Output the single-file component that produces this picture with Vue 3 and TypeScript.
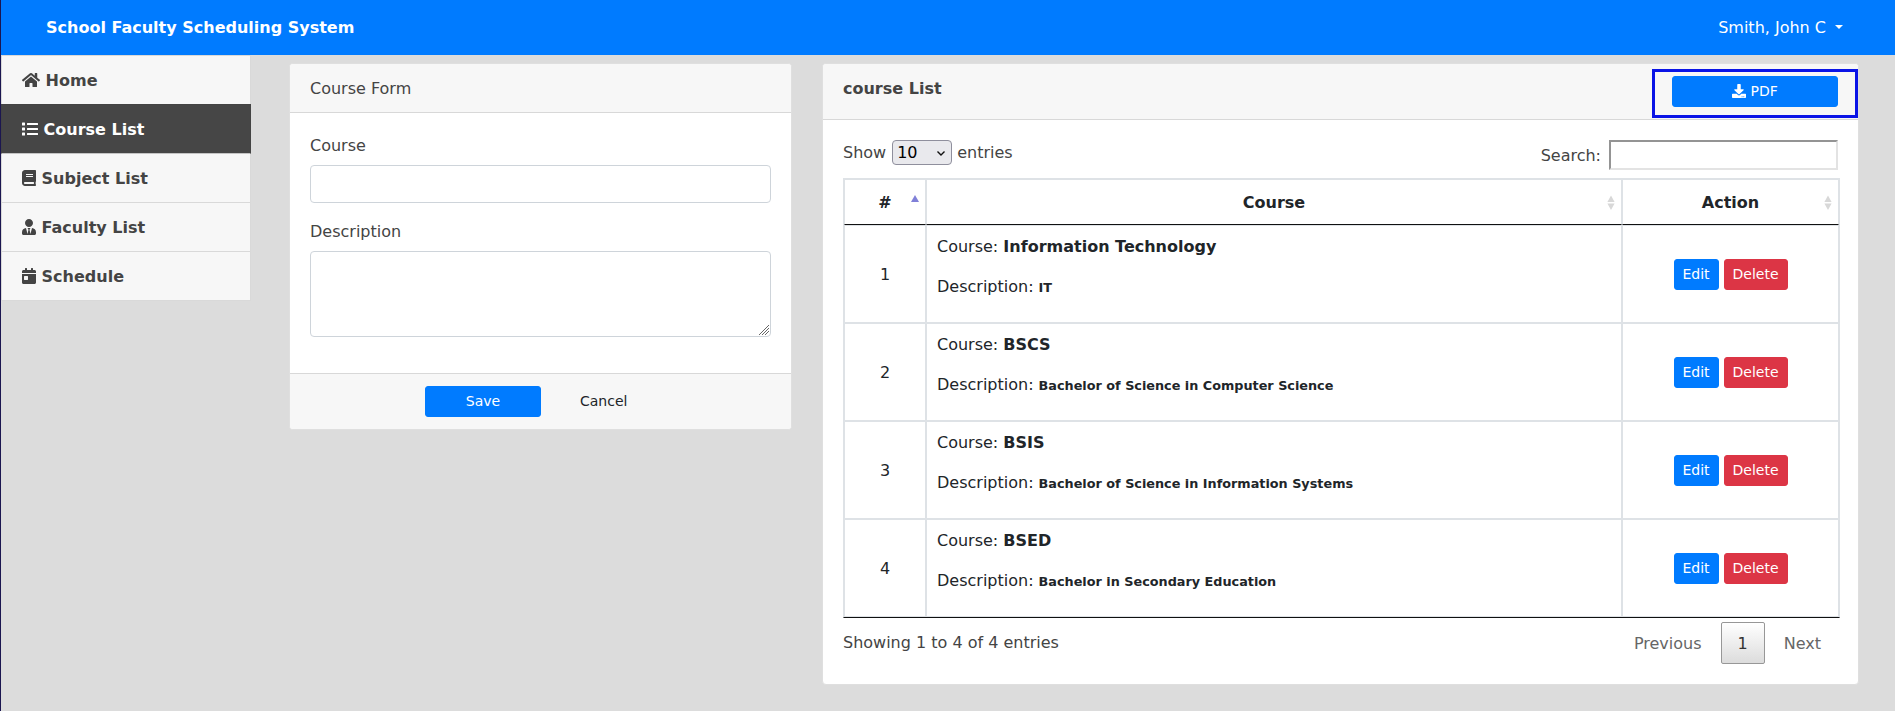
<script setup lang="ts">
import { ref } from 'vue'

interface NavItem {
  label: string
  viewBox: string
  width: 'wide' | 'square' | 'narrow'
  path: string
}

interface Course {
  id: number
  name: string
  description: string
}

const navItems: NavItem[] = [
  {
    label: 'Home',
    viewBox: '0 0 576 512',
    width: 'wide',
    path: 'M280.37 148.26L96 300.11V464a16 16 0 0 0 16 16l112.06-.29a16 16 0 0 0 15.92-16V368a16 16 0 0 1 16-16h64a16 16 0 0 1 16 16v95.64a16 16 0 0 0 16 16.05L464 480a16 16 0 0 0 16-16V300L295.67 148.26a12.19 12.19 0 0 0-15.3 0zM571.6 251.47L488 182.56V44.05a12 12 0 0 0-12-12h-56a12 12 0 0 0-12 12v72.61L318.47 43a48 48 0 0 0-61 0L4.34 251.47a12 12 0 0 0-1.6 16.9l25.5 31A12 12 0 0 0 45.15 301l235.22-193.74a12.19 12.19 0 0 1 15.3 0L530.9 301a12 12 0 0 0 16.9-1.6l25.5-31a12 12 0 0 0-1.7-16.93z',
  },
  {
    label: 'Course List',
    viewBox: '0 0 512 512',
    width: 'square',
    path: 'M80 368H16a16 16 0 0 0-16 16v64a16 16 0 0 0 16 16h64a16 16 0 0 0 16-16v-64a16 16 0 0 0-16-16zm0-320H16A16 16 0 0 0 0 64v64a16 16 0 0 0 16 16h64a16 16 0 0 0 16-16V64a16 16 0 0 0-16-16zm0 160H16a16 16 0 0 0-16 16v64a16 16 0 0 0 16 16h64a16 16 0 0 0 16-16v-64a16 16 0 0 0-16-16zm416 176H176a16 16 0 0 0-16 16v32a16 16 0 0 0 16 16h320a16 16 0 0 0 16-16v-32a16 16 0 0 0-16-16zm0-320H176a16 16 0 0 0-16 16v32a16 16 0 0 0 16 16h320a16 16 0 0 0 16-16V80a16 16 0 0 0-16-16zm0 160H176a16 16 0 0 0-16 16v32a16 16 0 0 0 16 16h320a16 16 0 0 0 16-16v-32a16 16 0 0 0-16-16z',
  },
  {
    label: 'Subject List',
    viewBox: '0 0 448 512',
    width: 'narrow',
    path: 'M448 360V24c0-13.3-10.7-24-24-24H96C43 0 0 43 0 96v320c0 53 43 96 96 96h328c13.3 0 24-10.7 24-24v-16c0-7.5-3.5-14.3-8.9-18.7-4.2-15.4-4.2-59.3 0-74.7 5.4-4.3 8.9-11.1 8.9-18.6zM128 134c0-3.3 2.7-6 6-6h212c3.3 0 6 2.7 6 6v20c0 3.3-2.7 6-6 6H134c-3.3 0-6-2.7-6-6v-20zm0 64c0-3.3 2.7-6 6-6h212c3.3 0 6 2.7 6 6v20c0 3.3-2.7 6-6 6H134c-3.3 0-6-2.7-6-6v-20zm253.4 250H96c-17.7 0-32-14.3-32-32 0-17.6 14.4-32 32-32h285.4c-1.9 17.1-1.9 46.9 0 64z',
  },
  {
    label: 'Faculty List',
    viewBox: '0 0 448 512',
    width: 'narrow',
    path: 'M224 256c70.7 0 128-57.3 128-128S294.7 0 224 0 96 57.3 96 128s57.3 128 128 128zm95.8 32.6L272 480l-32-136 32-56h-96l32 56-32 136-47.8-191.4C56.9 292 0 350.3 0 422.4V464c0 26.5 21.5 48 48 48h352c26.5 0 48-21.5 48-48v-41.6c0-72.1-56.9-130.4-128.2-133.8z',
  },
  {
    label: 'Schedule',
    viewBox: '0 0 448 512',
    width: 'narrow',
    path: 'M0 464c0 26.5 21.5 48 48 48h352c26.5 0 48-21.5 48-48V192H0v272zm64-192c0-8.8 7.2-16 16-16h96c8.8 0 16 7.2 16 16v96c0 8.8-7.2 16-16 16H80c-8.8 0-16-7.2-16-16v-96zM400 64h-48V16c0-8.8-7.2-16-16-16h-32c-8.8 0-16 7.2-16 16v48H160V16c0-8.8-7.2-16-16-16h-32c-8.8 0-16 7.2-16 16v48H48C21.5 64 0 85.5 0 112v48h448v-48c0-26.5-21.5-48-48-48z',
  },
]

const courses: Course[] = [
  { id: 1, name: 'Information Technology', description: 'IT' },
  { id: 2, name: 'BSCS', description: 'Bachelor of Science in Computer Science' },
  { id: 3, name: 'BSIS', description: 'Bachelor of Science in Information Systems' },
  { id: 4, name: 'BSED', description: 'Bachelor in Secondary Education' },
]

const activePage = ref('Course List')
const courseName = ref('')
const courseDescription = ref('')
const search = ref('')
const pageLength = ref('10')

function resetForm(): void {
  courseName.value = ''
  courseDescription.value = ''
}
</script>

<template>
  <div class="app">
    <header class="topbar">
      <span class="brand">School Faculty Scheduling System</span>
      <span class="account">Smith, John C<i class="caret"></i></span>
    </header>

    <div class="layout">
      <nav class="sidebar">
        <a
          v-for="item in navItems"
          :key="item.label"
          class="nav-item"
          :class="{ active: item.label === activePage }"
          @click="activePage = item.label"
        >
          <svg class="nav-icon" :class="item.width" :viewBox="item.viewBox">
            <path :d="item.path" fill="currentColor" />
          </svg>
          {{ item.label }}
        </a>
      </nav>

      <form class="card form-card" @submit.prevent>
        <div class="card-header">Course Form</div>
        <div class="form-body">
          <label class="field-label" for="course">Course</label>
          <input id="course" v-model="courseName" class="control" type="text" />
          <label class="field-label" for="description">Description</label>
          <div class="area-wrap">
            <textarea id="description" v-model="courseDescription" class="control area"></textarea>
            <svg class="grip" viewBox="0 0 10 10">
              <path d="M0 10L10 0M3 10l7-7M6 10l4-4" stroke="#666" stroke-width="1" fill="none" />
            </svg>
          </div>
        </div>
        <div class="form-footer">
          <button class="btn primary save" type="submit">Save</button>
          <button class="btn plain" type="button" @click="resetForm">Cancel</button>
        </div>
      </form>

      <section class="card list-card">
        <div class="card-header list-header">
          <b>course List</b>
          <div class="export">
            <button class="btn primary pdf">
              <svg class="download" viewBox="0 0 512 512">
                <path
                  fill="currentColor"
                  d="M216 0h80c13.3 0 24 10.7 24 24v168h87.7c17.8 0 26.7 21.5 14.1 34.1L269.700 378.3c-7.5 7.5-19.8 7.5-27.3 0L90.1 226.1c-12.6-12.6-3.7-34.1 14.1-34.1H192V24c0-13.3 10.7-24 24-24zm296 376v112c0 13.3-10.7 24-24 24H24c-13.3 0-24-10.7-24-24V376c0-13.3 10.7-24 24-24h146.7l49 49c20.1 20.1 52.5 20.1 72.6 0l49-49H488c13.3 0 24 10.7 24 24zm-124 88c0-11-9-20-20-20s-20 9-20 20 9 20 20 20 20-9 20-20zm64 0c0-11-9-20-20-20s-20 9-20 20 9 20 20 20 20-9 20-20z"
                />
              </svg>
              PDF
            </button>
          </div>
        </div>

        <div class="list-body">
          <div class="table-tools">
            <label class="length">
              Show
              <span class="select-wrap">
                <select v-model="pageLength">
                  <option>10</option>
                  <option>25</option>
                  <option>50</option>
                  <option>100</option>
                </select>
                <svg class="chevron" viewBox="0 0 8 5">
                  <path d="M.5 .5L4 4 7.5 .5" fill="none" stroke="#111" stroke-width="1.4" />
                </svg>
              </span>
              entries
            </label>
            <label class="filter">
              Search:
              <input v-model="search" type="text" />
            </label>
          </div>

          <table>
            <colgroup>
              <col class="col-id" />
              <col />
              <col class="col-action" />
            </colgroup>
            <thead>
              <tr>
                <th>
                  #
                  <svg class="sort" viewBox="0 0 8 16"><path d="M0 7L4 0l4 7z" fill="#8080d8" /></svg>
                </th>
                <th>
                  Course
                  <svg class="sort" viewBox="0 0 8 16">
                    <path d="M.4 7L4 .6 7.6 7zM.4 8.6L4 15l3.6-6.4z" fill="#d8d8d8" />
                  </svg>
                </th>
                <th>
                  Action
                  <svg class="sort" viewBox="0 0 8 16">
                    <path d="M.4 7L4 .6 7.6 7zM.4 8.6L4 15l3.6-6.4z" fill="#d8d8d8" />
                  </svg>
                </th>
              </tr>
            </thead>
            <tbody>
              <tr v-for="course in courses" :key="course.id">
                <td class="center">{{ course.id }}</td>
                <td>
                  <p>Course: <b>{{ course.name }}</b></p>
                  <p>Description: <small><b>{{ course.description }}</b></small></p>
                </td>
                <td>
                  <div class="actions">
                    <button class="btn primary edit">Edit</button>
                    <button class="btn danger">Delete</button>
                  </div>
                </td>
              </tr>
            </tbody>
          </table>

          <div class="table-footer">
            <span class="info">Showing 1 to 4 of 4 entries</span>
            <div class="pager">
              <a class="page">Previous</a>
              <a class="page current">1</a>
              <a class="page">Next</a>
            </div>
          </div>
        </div>
      </section>
    </div>
  </div>
</template>

<style>
body {
  background: #dcdcdc;
  overflow: hidden;
}
</style>

<style scoped>
.app,
.app * {
  box-sizing: border-box;
}
.app {
  height: 711px;
  border-left: 1px solid #1b1650;
  background: #dcdcdc;
  color: #444;
  font: 16px/25px 'DejaVu Sans', sans-serif;
}
button,
input,
select,
textarea {
  font-family: inherit;
  margin: 0;
}
.topbar {
  display: flex;
  justify-content: space-between;
  height: 55px;
  padding: 15px 52px 0 45px;
  background: #007bff;
  color: #fff;
}
.brand {
  font-weight: 700;
}
.caret {
  display: inline-block;
  margin-left: 9px;
  vertical-align: 4px;
  border: 4.8px solid transparent;
  border-top-color: #fff;
  border-bottom: 0;
}
.layout {
  display: flex;
  align-items: flex-start;
}
.sidebar {
  width: 250px;
  flex: none;
}
.nav-item {
  display: block;
  height: 49px;
  padding: 12px 20px 11px;
  border: 1px solid #d9d9d9;
  border-top: 0;
  background: #f7f7f7;
  color: #444;
  font-weight: 700;
  cursor: pointer;
}
.nav-item:first-child {
  height: 50px;
  border-top: 1px solid #d9d9d9;
}
.nav-item.active {
  position: relative;
  height: 50px;
  margin-top: -1px;
  border: 1px solid #444;
  border-bottom-color: #c4c4c4;
  background: #464646;
  color: #fff;
}
.nav-icon {
  height: 16px;
  vertical-align: -2px;
}
.wide {
  width: 18px;
}
.square {
  width: 16px;
}
.narrow {
  width: 14px;
}
.card {
  flex: none;
  margin-top: 8px;
  border: 1px solid #dfdfdf;
  border-radius: 4px;
  background: #fff;
}
.form-card {
  width: 503px;
  margin-left: 38px;
}
.card-header {
  height: 49px;
  padding: 12px 20px 11px;
  border-bottom: 1px solid #d8d8d8;
  border-radius: 3px 3px 0 0;
  background: #f7f7f7;
}
.form-body {
  padding: 20px;
}
.field-label {
  display: block;
  height: 24px;
  margin-bottom: 8px;
}
.control {
  display: block;
  width: 100%;
  height: 38px;
  margin-bottom: 16px;
  border: 1px solid #ced4da;
  border-radius: 4px;
  background: #fff;
  outline: 0;
}
.area-wrap {
  position: relative;
}
.area {
  height: 86px;
  resize: none;
}
.grip {
  position: absolute;
  right: 2px;
  bottom: 2px;
  width: 10px;
  height: 10px;
}
.form-footer {
  display: flex;
  gap: 30px;
  height: 56px;
  padding: 12px 20px 12px 135px;
  border-top: 1px solid #d8d8d8;
  border-radius: 0 0 3px 3px;
  background: #f7f7f7;
}
.btn {
  height: 31px;
  padding: 4px 8px;
  border: 1px solid transparent;
  border-radius: 3px;
  background: transparent;
  font-size: 14px;
  line-height: 21px;
  white-space: nowrap;
}
.primary {
  border-color: #007bff;
  background: #007bff;
  color: #fff;
}
.danger {
  width: 64px;
  border-color: #dc3545;
  background: #dc3545;
  color: #fff;
}
.edit {
  width: 45px;
}
.plain {
  color: #212529;
}
.save {
  width: 116px;
}
.list-card {
  width: 1037px;
  margin-left: 30px;
}
.list-header {
  position: relative;
  height: 56px;
}
.export {
  position: absolute;
  top: 5px;
  right: 0;
  display: flex;
  width: 206px;
  height: 49px;
  padding: 4px 17px 0;
  border: 3px solid #0a14e6;
}
.pdf {
  width: 166px;
}
.download {
  width: 14px;
  height: 14px;
  vertical-align: -2px;
}
.list-body {
  padding: 20px;
}
.table-tools {
  display: flex;
  justify-content: space-between;
  height: 38px;
}
.length {
  display: flex;
  gap: 5px;
}
.select-wrap {
  position: relative;
  display: block;
  height: 25px;
  margin-left: 1px;
}
select {
  width: 60px;
  height: 25px;
  padding: 0 4px;
  border: 1px solid #8f8f9d;
  border-radius: 4px;
  background: #e9e9ed;
  color: #000;
  font-size: 16px;
  line-height: 23px;
  appearance: none;
}
.chevron {
  position: absolute;
  top: 11px;
  right: 7px;
  width: 8px;
  height: 5px;
}
.filter {
  display: flex;
  line-height: 31px;
}
.filter input {
  width: 229px;
  height: 30px;
  margin-left: 8px;
  border: 2px solid;
  border-color: #949494 #e3e3e3 #e3e3e3 #949494;
  background: #fff;
  outline: 0;
}
table {
  width: 997px;
  border: 1px solid #dee2e6;
  border-bottom-color: #111;
  border-collapse: separate;
  border-spacing: 0;
  table-layout: fixed;
  color: #212529;
}
.col-id {
  width: 82px;
}
.col-action {
  width: 217px;
}
th {
  position: relative;
  height: 46px;
  padding: 10px 18px 9px;
  border: 1px solid #dee2e6;
  border-bottom-color: #111;
  text-align: center;
}
.sort {
  position: absolute;
  top: 15px;
  right: 6px;
  width: 8px;
  height: 16px;
}
td {
  height: 98px;
  padding: 8px 10px;
  border: 1px solid #dee2e6;
  vertical-align: middle;
}
.center {
  padding-top: 9px;
  text-align: center;
}
p {
  margin: 0 0 16px;
  height: 24px;
}
small {
  font-size: 12.8px;
}
.actions {
  display: flex;
  justify-content: center;
  gap: 5px;
}
.table-footer {
  display: flex;
  justify-content: space-between;
  padding-top: 4px;
}
.info {
  padding-top: 8px;
}
.pager {
  display: flex;
  gap: 2px;
}
.page {
  height: 42px;
  padding: 8px 16px;
  border: 1px solid transparent;
  border-radius: 2px;
  color: #666;
}
.current {
  border-color: #979797;
  background: linear-gradient(#fff, #dcdcdc);
  color: #333;
}
</style>
